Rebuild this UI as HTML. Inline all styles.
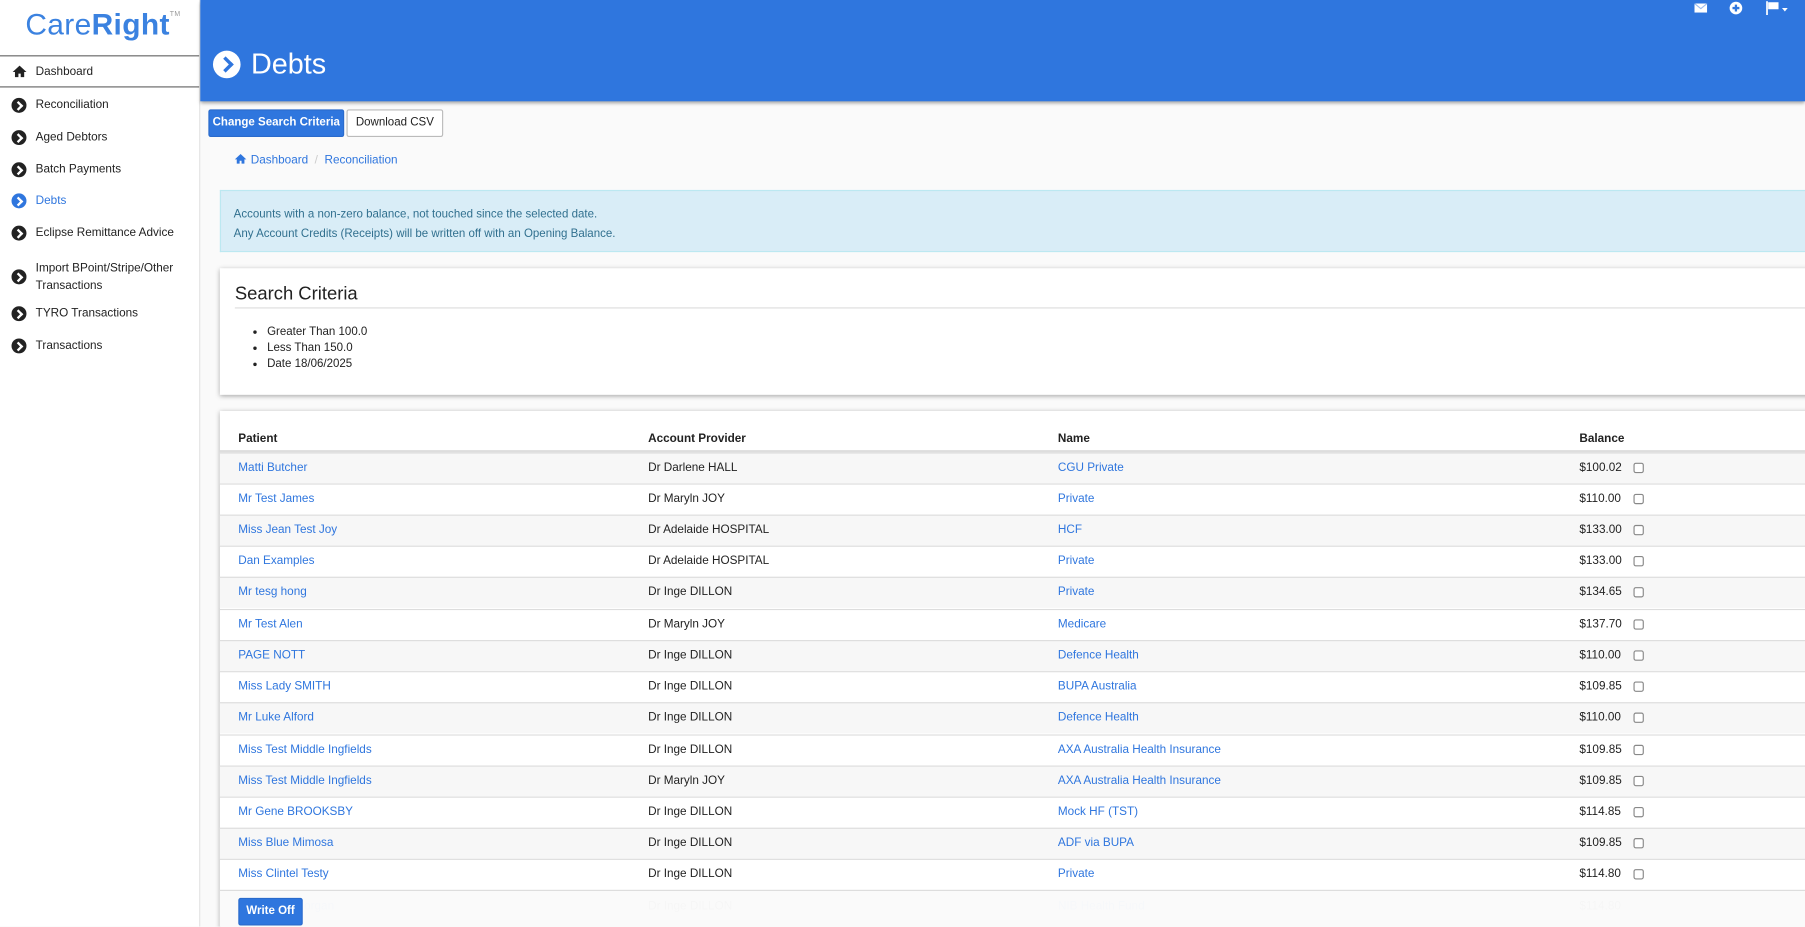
<!DOCTYPE html>
<html><head><meta charset="utf-8"><style>
*{box-sizing:border-box;margin:0;padding:0}
html,body{width:1805px;height:927px;overflow:hidden;background:#fafafa}
#w{position:absolute;left:0;top:0;width:1568px;height:805px;transform:scale(1.15115);transform-origin:0 0;font-family:"Liberation Sans",sans-serif;font-size:10.2px;color:#333;overflow:hidden}
a{color:#2f76de;text-decoration:none}
.side{position:absolute;left:0;top:0;width:174px;height:805px;background:#fff;border-right:1px solid #e3e3e3}
.logo{position:absolute;left:22px;top:6px;font-size:26px;color:#3b82e0;letter-spacing:0.3px}
.logo b{font-weight:bold}
.logo sup{font-size:6px;color:#999;vertical-align:top;position:relative;top:4px}
.nav{position:absolute;left:0;width:173px;font-size:10.2px;color:#222}
.nav .ic{position:absolute;left:10px;top:-1px;width:13px;height:13px;border-radius:50%;background:#222}
.nav .ic:after{content:"";position:absolute;left:3px;top:3.5px;width:4px;height:4px;border-right:2px solid #fff;border-top:2px solid #fff;transform:rotate(45deg)}
.nav span{position:absolute;left:31px}
.hdr{position:absolute;left:174px;top:0;right:0;height:88px;background:#2f76de;box-shadow:0 2px 3px rgba(0,0,0,.35)}
.hdr h1{position:absolute;left:44px;top:42px;font-size:25px;font-weight:normal;color:#fff}
.bigic{position:absolute;left:11px;top:44px;width:24px;height:24px;border-radius:50%;background:#fff}
.bigic:after{content:"";position:absolute;left:6px;top:7px;width:7px;height:7px;border-right:3px solid #2f76de;border-top:3px solid #2f76de;transform:rotate(45deg)}
.btn{position:absolute;height:24px;border-radius:2px;font-size:10px;line-height:22px;text-align:center}
.card{position:absolute;background:#fff;box-shadow:0 1px 4px rgba(0,0,0,.35)}
.row{position:absolute;left:191px;width:1400px;height:27px;border-top:1px solid #ddd;line-height:26px}
.row.g{background:#f7f7f7}
.row div{position:absolute;top:0}
.c1{left:16px}.c2{left:372px;color:#222}.c3{left:728px}.c4{left:1181px;color:#222}
.cb{left:1228px!important;top:8px!important;width:9px;height:9px;border:1px solid #888;border-radius:2px;background:#fff}
</style></head><body><div id="w">
<div class="side">
 <div class="logo">Care<b>Right</b><sup>TM</sup></div>
 <div style="position:absolute;left:0;top:48px;width:173px;height:28px;border-top:1px solid #666;border-bottom:1px solid #666"></div>
 <div class="nav" style="top:57px"><svg style="position:absolute;left:10px;top:-1px" width="14" height="12" viewBox="0 0 14 12"><path d="M7 1L1 6.5h2V11h3V8h2v3h3V6.5h2z" fill="#222"/></svg><span>Dashboard</span></div>
 <div class="nav" style="top:86px"><i class="ic"></i><span>Reconciliation</span></div>
 <div class="nav" style="top:114px"><i class="ic"></i><span>Aged Debtors</span></div>
 <div class="nav" style="top:142px"><i class="ic"></i><span>Batch Payments</span></div>
 <div class="nav" style="top:169px"><i class="ic" style="background:#2f76de"></i><span style="color:#2f76de">Debts</span></div>
 <div class="nav" style="top:197px"><i class="ic"></i><span>Eclipse Remittance Advice</span></div>
 <div class="nav" style="top:226px"><i class="ic" style="top:8px"></i><span style="line-height:15px">Import BPoint/Stripe/Other<br>Transactions</span></div>
 <div class="nav" style="top:267px"><i class="ic"></i><span>TYRO Transactions</span></div>
 <div class="nav" style="top:295px"><i class="ic"></i><span>Transactions</span></div>
</div>
<div class="hdr"><div class="bigic"></div><h1>Debts</h1>
 <svg style="position:absolute;left:1298px;top:3px" width="11" height="8"><rect width="11" height="8" fill="#fff"/><path d="M0 0L5.5 4.5L11 0" stroke="#9bbcef" fill="none"/></svg>
 <svg style="position:absolute;left:1328px;top:1px" width="12" height="12"><circle cx="6" cy="6" r="5.5" fill="#fff"/><path d="M6 3v6M3 6h6" stroke="#2f76de" stroke-width="2"/></svg>
 <svg style="position:absolute;left:1360px;top:1px" width="20" height="12"><path d="M1 0v12" stroke="#fff" stroke-width="1.5"/><path d="M2 1h9v6H2z" fill="#fff"/><path d="M14 6h5l-2.5 3z" fill="#fff"/></svg>
</div>
<div class="btn" style="left:181px;top:95px;width:118px;background:#2f76de;color:#fff;border:1px solid #2a6bcc;font-weight:bold">Change Search Criteria</div>
<div class="btn" style="left:301px;top:95px;width:84px;background:#fff;color:#222;border:1px solid #bbb">Download CSV</div>
<div style="position:absolute;left:203px;top:133px;font-size:10.2px"><svg width="12" height="10" viewBox="0 0 14 12" style="vertical-align:-1px"><path d="M7 1L1 6.5h2V11h3V8h2v3h3V6.5h2z" fill="#2f76de"/></svg> <a>Dashboard</a> <span style="color:#ccc">&nbsp;/&nbsp;</span> <a>Reconciliation</a></div>
<div style="position:absolute;left:191px;top:165px;width:1400px;height:54px;background:#d9edf7;border:1px solid #bce8f1;border-right:none;color:#31708f;padding:12px 11px;line-height:17px;font-size:10px">Accounts with a non-zero balance, not touched since the selected date.<br>Any Account Credits (Receipts) will be written off with an Opening Balance.</div>
<div class="card" style="left:191px;top:233px;width:1400px;height:110px">
 <div style="position:absolute;left:13px;top:14px;font-size:16px;color:#222">Search Criteria</div>
 <div style="position:absolute;left:13px;top:34px;width:1390px;border-top:1px solid #ddd"></div>
 <ul style="position:absolute;left:27px;top:49px;line-height:14px;font-size:10px;color:#222;padding-left:14px">
 <li>Greater Than 100.0</li><li>Less Than 150.0</li><li>Date 18/06/2025</li></ul>
</div>
<div class="card" style="left:191px;top:357px;width:1400px;height:500px"></div>
<div style="position:absolute;left:191px;top:376px;width:1400px;font-weight:bold;color:#222">
 <div style="position:absolute;left:16px">Patient</div><div style="position:absolute;left:372px">Account Provider</div><div style="position:absolute;left:728px">Name</div><div style="position:absolute;left:1181px">Balance</div></div>
<div style="position:absolute;left:191px;top:391px;width:1400px;border-top:2px solid #ddd"></div>
<div class="row g" style="top:393px"><div class="c1"><a>Matti Butcher</a></div><div class="c2">Dr Darlene HALL</div><div class="c3"><a>CGU Private</a></div><div class="c4">$100.02</div><div class="cb"></div></div>
<div class="row" style="top:420px"><div class="c1"><a>Mr Test James</a></div><div class="c2">Dr Maryln JOY</div><div class="c3"><a>Private</a></div><div class="c4">$110.00</div><div class="cb"></div></div>
<div class="row g" style="top:447px"><div class="c1"><a>Miss Jean Test Joy</a></div><div class="c2">Dr Adelaide HOSPITAL</div><div class="c3"><a>HCF</a></div><div class="c4">$133.00</div><div class="cb"></div></div>
<div class="row" style="top:474px"><div class="c1"><a>Dan Examples</a></div><div class="c2">Dr Adelaide HOSPITAL</div><div class="c3"><a>Private</a></div><div class="c4">$133.00</div><div class="cb"></div></div>
<div class="row g" style="top:501px"><div class="c1"><a>Mr tesg hong</a></div><div class="c2">Dr Inge DILLON</div><div class="c3"><a>Private</a></div><div class="c4">$134.65</div><div class="cb"></div></div>
<div class="row" style="top:529px"><div class="c1"><a>Mr Test Alen</a></div><div class="c2">Dr Maryln JOY</div><div class="c3"><a>Medicare</a></div><div class="c4">$137.70</div><div class="cb"></div></div>
<div class="row g" style="top:556px"><div class="c1"><a>PAGE NOTT</a></div><div class="c2">Dr Inge DILLON</div><div class="c3"><a>Defence Health</a></div><div class="c4">$110.00</div><div class="cb"></div></div>
<div class="row" style="top:583px"><div class="c1"><a>Miss Lady SMITH</a></div><div class="c2">Dr Inge DILLON</div><div class="c3"><a>BUPA Australia</a></div><div class="c4">$109.85</div><div class="cb"></div></div>
<div class="row g" style="top:610px"><div class="c1"><a>Mr Luke Alford</a></div><div class="c2">Dr Inge DILLON</div><div class="c3"><a>Defence Health</a></div><div class="c4">$110.00</div><div class="cb"></div></div>
<div class="row" style="top:638px"><div class="c1"><a>Miss Test Middle Ingfields</a></div><div class="c2">Dr Inge DILLON</div><div class="c3"><a>AXA Australia Health Insurance</a></div><div class="c4">$109.85</div><div class="cb"></div></div>
<div class="row g" style="top:665px"><div class="c1"><a>Miss Test Middle Ingfields</a></div><div class="c2">Dr Maryln JOY</div><div class="c3"><a>AXA Australia Health Insurance</a></div><div class="c4">$109.85</div><div class="cb"></div></div>
<div class="row" style="top:692px"><div class="c1"><a>Mr Gene BROOKSBY</a></div><div class="c2">Dr Inge DILLON</div><div class="c3"><a>Mock HF (TST)</a></div><div class="c4">$114.85</div><div class="cb"></div></div>
<div class="row g" style="top:719px"><div class="c1"><a>Miss Blue Mimosa</a></div><div class="c2">Dr Inge DILLON</div><div class="c3"><a>ADF via BUPA</a></div><div class="c4">$109.85</div><div class="cb"></div></div>
<div class="row" style="top:746px"><div class="c1"><a>Miss Clintel Testy</a></div><div class="c2">Dr Inge DILLON</div><div class="c3"><a>Private</a></div><div class="c4">$114.80</div><div class="cb"></div></div>
<div class="row" style="top:774px;opacity:.2"><div class="c1"><a>Miss Jane Morgan</a></div><div class="c2">Dr Inge DILLON</div><div class="c3"><a>NIB Health Fund</a></div><div class="c4">$114.80</div></div>
<div style="position:absolute;left:191px;top:773px;width:1400px;height:40px;background:rgba(250,250,250,.9);border-top:1px solid #ddd"></div>
<div class="btn" style="left:207px;top:780px;width:56px;height:24px;background:#2f76de;color:#fff;border:1px solid #2a6bcc;font-weight:bold">Write Off</div>
</div></body></html>
